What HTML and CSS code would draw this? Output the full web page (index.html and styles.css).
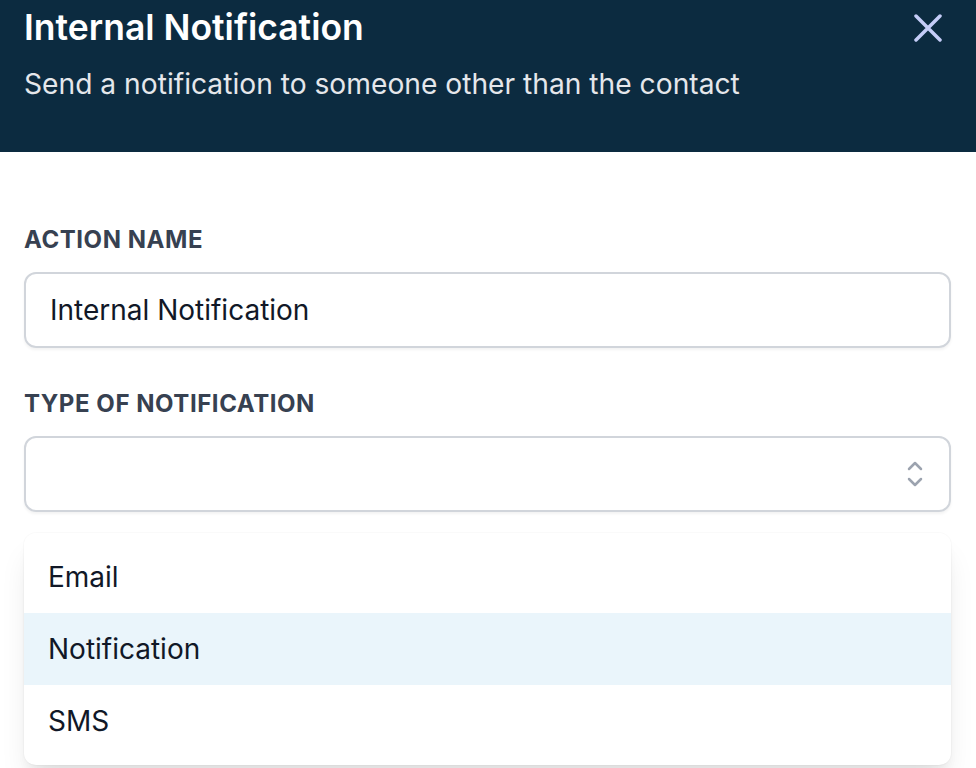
FILE: index.html
```html
<html>
<head>
<title>Internal Notification</title>
<link rel="stylesheet" href="styles.css">
</head>
<body>
<div class="panel">
  <div class="header">
    <div class="header-text">
      <h1 class="title">Internal Notification</h1>
      <p class="subtitle">Send a notification to someone other than the contact</p>
    </div>
    <button class="close" aria-label="Close">
      <svg width="28" height="28" viewBox="0 0 28 28"><path d="M2 2L26 26M26 2L2 26" stroke="#c5cdf8" stroke-width="3.5" stroke-linecap="round"/></svg>
    </button>
  </div>

  <div class="form">
    <label class="label">Action Name</label>
    <div class="input">Internal Notification</div>

    <label class="label second">Type of Notification</label>
    <div class="input select">
      <span></span>
      <svg class="updown" width="16" height="28" viewBox="0 0 16 28"><path d="M2 9L8 3L14 9M2 19L8 25L14 19" fill="none" stroke="#9ca3af" stroke-width="2.5" stroke-linecap="round" stroke-linejoin="round"/></svg>
    </div>

    <ul class="options">
      <li>Email</li>
      <li class="active">Notification</li>
      <li>SMS</li>
    </ul>
  </div>
</div>
</body>
</html>
```

FILE: styles.css
```css
html, body {
  margin: 0;
  padding: 0;
}
body {
  font-family: 'Inter', 'Noto Sans', sans-serif;
  background: #fff;
  color: #111827;
  width: 976px;
  height: 768px;
  overflow: hidden;
}
.header {
  background: #0c2b40;
  height: 152px;
  box-sizing: border-box;
  padding: 0 24px;
  display: flex;
  justify-content: space-between;
  align-items: flex-start;
}
.title {
  margin: 0;
  color: #fff;
  font-size: 35.5px;
  line-height: 56px;
  font-weight: 600;
}
.subtitle {
  margin: 8px 0 0;
  color: #e5e7eb;
  font-size: 28.2px;
  line-height: 40px;
}
.close {
  background: none;
  border: 0;
  padding: 0;
  margin: 14px 10px 0 0;
  display: flex;
  cursor: pointer;
}
.form {
  padding: 72px 25px 0 24px;
}
.label {
  display: block;
  font-size: 24px;
  line-height: 32px;
  font-weight: 700;
  letter-spacing: 0.55px;
  color: #374151;
  text-transform: uppercase;
  margin-bottom: 16px;
}
.label.second {
  margin-top: 40px;
}
.input {
  height: 76px;
  box-sizing: border-box;
  border: 2px solid #d1d5db;
  border-radius: 12px;
  padding: 16px 24px;
  font-size: 28px;
  line-height: 40px;
  box-shadow: 0 2px 3px rgba(0,0,0,0.05);
}
.select {
  display: flex;
  justify-content: space-between;
  align-items: center;
  padding-right: 26px;
}
.updown {
  display: block;
}
.options {
  list-style: none;
  margin: 21px 0 0;
  padding: 8px 0;
  border-radius: 12px;
  background: #fff;
  box-shadow: 0 20px 30px -6px rgba(0,0,0,0.1), 0 8px 12px -4px rgba(0,0,0,0.06), 0 0 0 1px rgba(0,0,0,0.02);
}
.options li {
  height: 72px;
  padding: 0 24px;
  font-size: 28px;
  line-height: 72px;
  color: #111827;
}
.options li.active {
  background: #eaf5fb;
}
```
